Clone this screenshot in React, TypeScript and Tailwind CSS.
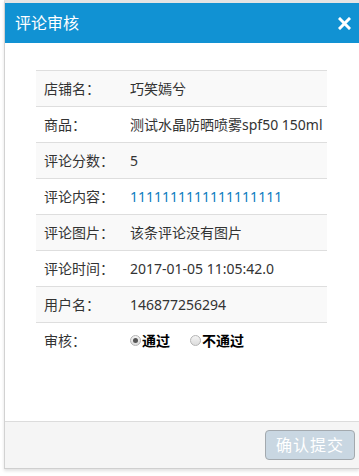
import { useState } from "react"

const rows = [
    { label: "店铺名：", value: "巧笑嫣兮" },
    { label: "商品：", value: "测试水晶防晒喷雾spf50 150ml" },
    { label: "评论分数：", value: "5" },
    { label: "评论内容：", value: "1111111111111111111", blue: true },
    { label: "评论图片：", value: "该条评论没有图片" },
    { label: "评论时间：", value: "2017-01-05 11:05:42.0" },
    { label: "用户名：", value: "146877256294" },
]

function Radio({ checked, text, onClick }: { checked: boolean, text: string, onClick: () => void }) {
    return (
        <label className="flex items-center cursor-pointer" onClick={onClick}>
            <span className="w-[11px] h-[11px] rounded-full border border-[#b5b5b5] bg-gradient-to-b from-[#f4f4f4] to-[#dcdcdc] flex items-center justify-center">
                {checked && <span className="w-[5px] h-[5px] rounded-full bg-[#555]"></span>}
            </span>
            <span className="ml-[1px] font-bold text-black">{text}</span>
        </label>
    )
}

export default function App() {

    const [ pass, setPass ] = useState(true)

    return <>
    <div className="w-[359px] h-[476px] bg-white overflow-hidden pl-[4px] text-[14px] text-[#333]"
        style={{ fontFamily: '"Noto Sans", "Noto Sans CJK SC", sans-serif' }}>
        <div className="w-[355px] h-[469px] flex flex-col border-t-[3px] border-t-[#e4e4e4] border-l border-l-[#d2d2d2] border-b border-b-[#cfcfcf] shadow-[0_2px_3px_rgba(0,0,0,0.12)]">

            <div className="h-[40px] bg-[#1192d3] flex items-center justify-between pl-[10px] pr-[8px] shrink-0">
                <span className="text-white text-[16px]">评论审核</span>
                <svg width="13" height="13" viewBox="0 0 13 13">
                    <path d="M2 2 L11 11 M11 2 L2 11" stroke="#fff" strokeWidth="3" strokeLinecap="square" />
                </svg>
            </div>

            <div className="flex-1 bg-white pt-[27px] pl-[31px]">
                <div className="w-[291px] flex flex-col">
                    { rows.map( (r, i) =>
                        <div key={i} className={`h-[36px] flex items-center border-t border-[#dedede] ${ i % 2 == 0 ? "bg-[#f9f9f9]" : "bg-white" }`}>
                            <div className="w-[86px] pl-[8px] shrink-0">{ r.label }</div>
                            <div className={`pl-[8px] whitespace-nowrap ${ r.blue ? "text-[#0d7cbf]" : "" }`}>{ r.value }</div>
                        </div>
                    )}
                    <div className="h-[36px] flex items-center border-t border-[#dedede] bg-white">
                        <div className="w-[86px] pl-[8px] shrink-0">审核：</div>
                        <div className="pl-[8px] flex items-center gap-[20px]">
                            <Radio checked={pass} text="通过" onClick={ () => setPass(true) } />
                            <Radio checked={!pass} text="不通过" onClick={ () => setPass(false) } />
                        </div>
                    </div>
                </div>
            </div>

            <div className="h-[47px] shrink-0 bg-[#f5f5f5] border-t border-[#dcdcdc] flex items-start justify-end pt-[8px] pr-[4px]">
                <button className="w-[90px] h-[30px] rounded-[4px] border border-[#a3a9ae] bg-[#c9d7e2] text-white text-[16px] tracking-[1px] flex items-center justify-center">
                    确认提交
                </button>
            </div>
        </div>
    </div>
    </>
}
